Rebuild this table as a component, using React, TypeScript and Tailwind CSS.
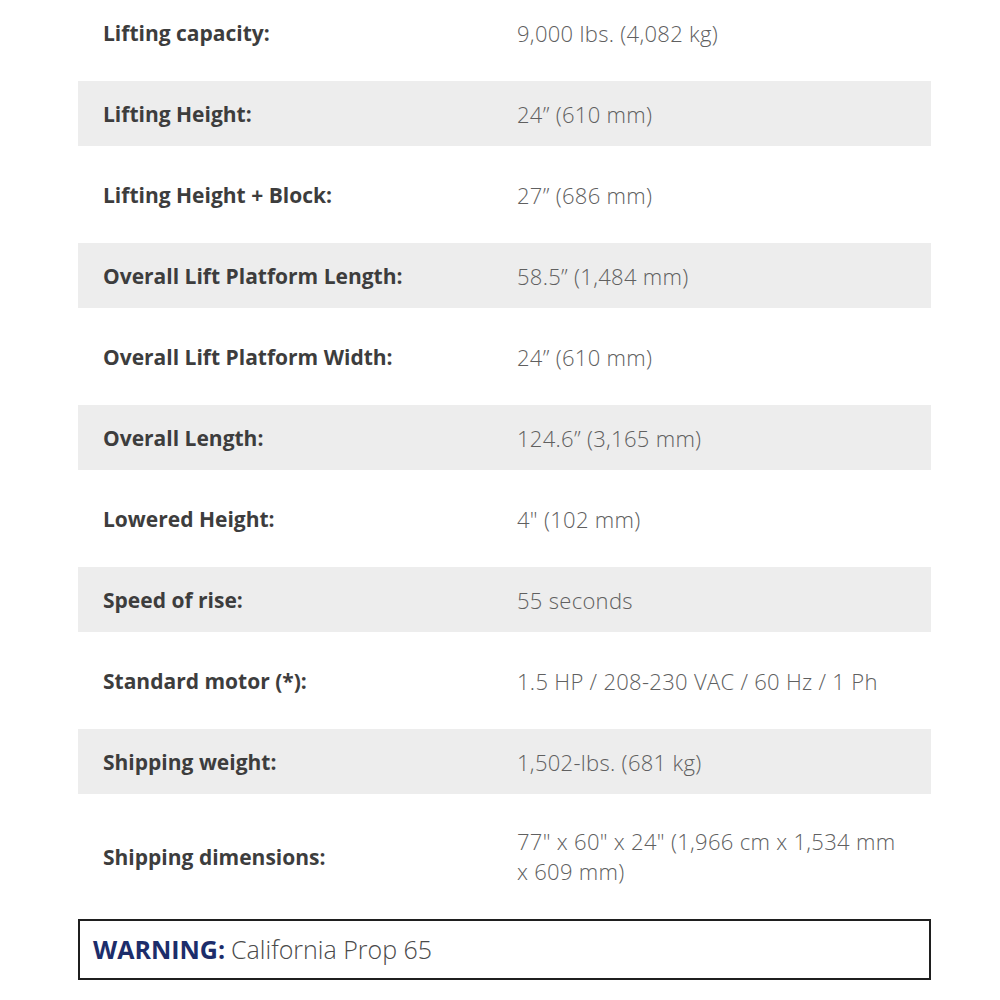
const specs: [string, string][] = [
  ['Lifting capacity:', '9,000 lbs. (4,082 kg)'],
  ['Lifting Height:', '24” (610 mm)'],
  ['Lifting Height + Block:', '27” (686 mm)'],
  ['Overall Lift Platform Length:', '58.5” (1,484 mm)'],
  ['Overall Lift Platform Width:', '24” (610 mm)'],
  ['Overall Length:', '124.6” (3,165 mm)'],
  ['Lowered Height:', '4" (102 mm)'],
  ['Speed of rise:', '55 seconds'],
  ['Standard motor (*):', '1.5 HP / 208-230 VAC / 60 Hz / 1 Ph'],
  ['Shipping weight:', '1,502-lbs. (681 kg)'],
  ['Shipping dimensions:', '77" x 60" x 24" (1,966 cm x 1,534 mm x 609 mm)'],
]

export default function App() {
  return (
    <div className="min-h-[1000px] w-[1000px] bg-white font-['Open_Sans',sans-serif]">
      <div className="ml-[78px] w-[853px]">
        <div className="flex flex-col gap-4">
          {specs.map(([label, value], i) => (
            <div
              key={label}
              className={`grid min-h-[65px] grid-cols-[439px_1fr] items-center ${
                i % 2 === 1 ? 'bg-[#ededed]' : 'bg-white'
              } ${i === specs.length - 1 ? 'py-4' : ''}`}
            >
              <div className="pl-[25px] pt-[3px] text-[21px] font-bold text-[#3d3d3d]">{label}</div>
              <div className="pr-6 text-[22px] font-light leading-[30px] tracking-[0.3px] text-[#606060]">
                {value}
              </div>
            </div>
          ))}
        </div>
        <div className="mt-[17px] flex h-[61px] items-center border-2 border-[#1f1f1f] px-[13px] text-[25px]">
          <span className="font-bold text-[#1c2d6b]">WARNING:</span>
          <span className="ml-[6px] font-light text-[#4a4a4a]">California Prop 65</span>
        </div>
      </div>
    </div>
  )
}
